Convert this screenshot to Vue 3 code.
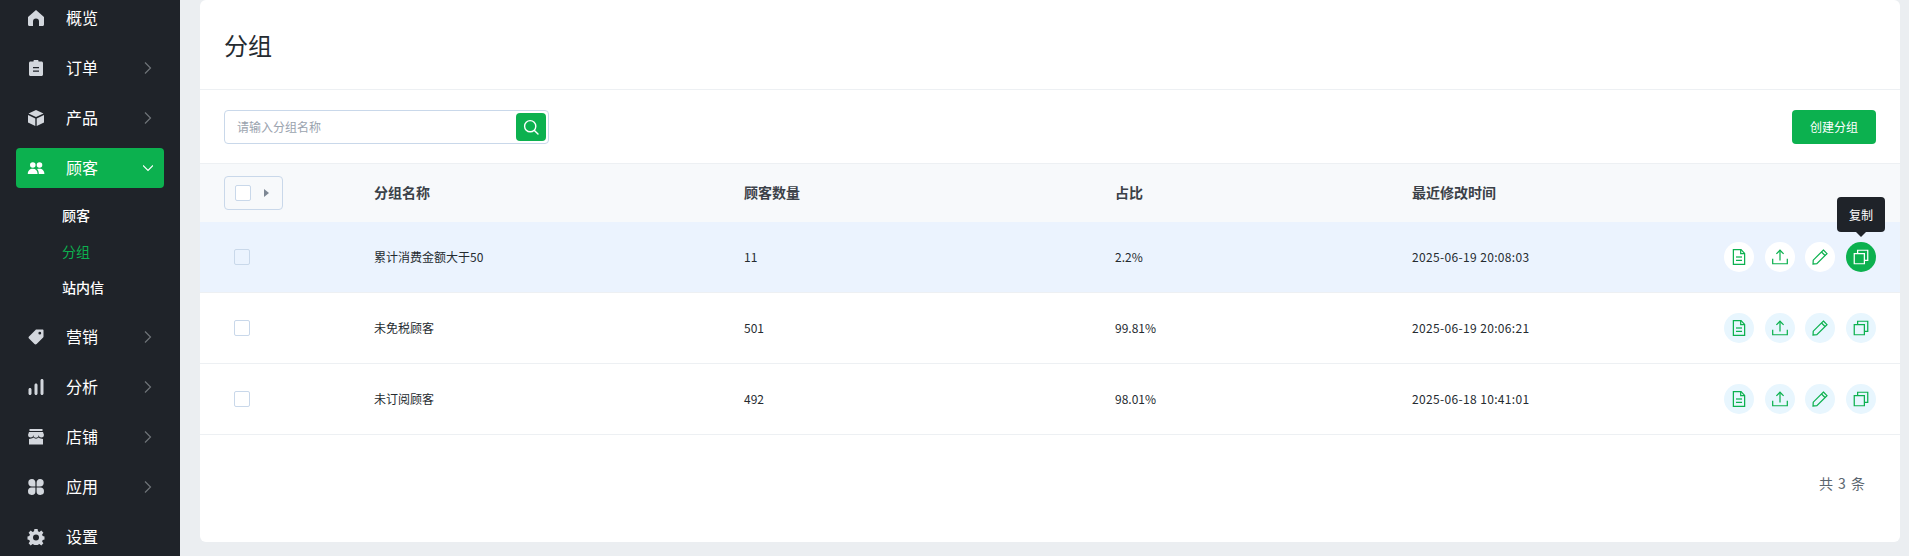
<template>
  <div class="page">
    <!-- Menu latéral -->
    <aside class="sidebar">
      <template v-for="item in menu" :key="item.label">
        <div class="nav-item" :class="{ active: item.active }">
          <svg class="nav-icon" viewBox="0 0 18 18">
            <path :d="item.icon" fill="currentColor" fill-rule="evenodd" />
          </svg>
          <span class="nav-label">{{ item.label }}</span>
          <svg v-if="item.arrow" class="nav-arrow" viewBox="0 0 10 14">
            <path :d="item.active ? 'M0 4.5 5 9.5 10 4.5' : 'M2 1.5 7.5 7 2 12.5'" fill="none" stroke="currentColor" stroke-width="1.2" />
          </svg>
        </div>
        <div v-if="item.children" class="sub-nav">
          <div v-for="sub in item.children" :key="sub.label" class="sub-item" :class="{ current: sub.current }">{{ sub.label }}</div>
        </div>
      </template>
    </aside>

    <main class="content">
      <section class="card">
        <h1 class="title">分组</h1>

        <div class="toolbar">
          <div class="search">
            <span class="placeholder">请输入分组名称</span>
            <button class="search-btn">
              <svg viewBox="0 0 16 16" width="16" height="16">
                <circle cx="7.2" cy="7.2" r="5.6" fill="none" stroke="#fff" stroke-width="1.4" />
                <path d="M11.4 11.4 15 15" stroke="#fff" stroke-width="1.4" stroke-linecap="round" />
              </svg>
            </button>
          </div>
          <button class="create-btn">创建分组</button>
        </div>

        <table class="table">
          <colgroup>
            <col class="col-check" />
            <col class="col-name" />
            <col class="col-count" />
            <col class="col-ratio" />
            <col class="col-date" />
            <col />
          </colgroup>
          <thead>
            <tr>
              <th>
                <div class="select-all">
                  <span class="checkbox"></span>
                  <span class="caret"></span>
                </div>
              </th>
              <th><span class="cell">分组名称</span></th>
              <th><span class="cell">顾客数量</span></th>
              <th><span class="cell">占比</span></th>
              <th><span class="cell">最近修改时间</span></th>
              <th></th>
            </tr>
          </thead>
          <tbody>
            <tr v-for="(row, i) in rows" :key="row.name" :class="{ hovered: i === 0 }">
              <td><span class="checkbox row-check"></span></td>
              <td><span class="cell">{{ row.name }}</span></td>
              <td><span class="cell">{{ row.count }}</span></td>
              <td><span class="cell">{{ row.ratio }}</span></td>
              <td><span class="cell date">{{ row.date }}</span></td>
              <td>
                <div class="actions">
                  <span v-for="(a, j) in actions" :key="a.name" class="action" :class="{ on: i === 0 && j === 3 }">
                    <svg viewBox="0 0 16 16" width="18" height="18" fill="none" stroke="currentColor" stroke-width="1.1">
                      <path v-for="d in a.paths" :key="d" :d="d" />
                    </svg>
                    <span v-if="i === 0 && j === 3" class="tooltip">{{ a.name }}</span>
                  </span>
                </div>
              </td>
            </tr>
          </tbody>
        </table>

        <div class="pagination">共 3 条</div>
      </section>
    </main>
  </div>
</template>

<script setup>
const menu = [
  { label: '概览', icon: 'M9 1 17 8V15.5C17 16.3 16.4 17 15.6 17H12V12.5A3 3 0 0 0 6 12.5V17H2.4C1.6 17 1 16.3 1 15.5V8Z' },
  { label: '订单', arrow: true, icon: 'M6.5 2.5V2C6.5 1.4 7 1 7.5 1H10.5C11 1 11.5 1.4 11.5 2V2.5H14.5C15.3 2.5 16 3.2 16 4V15.5C16 16.3 15.3 17 14.5 17H3.5C2.7 17 2 16.3 2 15.5V4C2 3.2 2.7 2.5 3.5 2.5ZM6 8V9.2H12V8ZM6 11.5V12.7H12V11.5Z' },
  { label: '产品', arrow: true, icon: 'M9 1 16.5 4.5 9 8 1.5 4.5ZM1 6 8.3 9.4V17L1 13.5ZM17 6V13.5L9.7 17V9.4Z' },
  {
    label: '顾客', arrow: true, active: true,
    icon: 'M5.8 3.2A2.8 2.8 0 1 1 5.8 8.8 2.8 2.8 0 0 1 5.8 3.2ZM12.5 3.2A2.8 2.8 0 1 1 12.5 8.8 2.8 2.8 0 0 1 12.5 3.2ZM0.8 15C0.8 11.8 2.8 9.8 5.8 9.8 8.8 9.8 10.6 11.8 10.6 15ZM11.8 15C11.8 13 11.2 11.2 10.1 10.1 10.8 9.9 11.6 9.8 12.5 9.8 15.4 9.8 17.4 11.8 17.4 15Z',
    children: [{ label: '顾客' }, { label: '分组', current: true }, { label: '站内信' }]
  },
  { label: '营销', arrow: true, icon: 'M9.5 1.5H15.5C16.1 1.5 16.5 1.9 16.5 2.5V8.5C16.5 8.9 16.4 9.2 16.1 9.5L9.6 16C9 16.6 8.1 16.6 7.5 16L2 10.5C1.4 9.9 1.4 9 2 8.4L8.5 1.9C8.8 1.6 9.1 1.5 9.5 1.5ZM12.8 3.8A1.4 1.4 0 1 0 12.8 6.6 1.4 1.4 0 0 0 12.8 3.8Z' },
  { label: '分析', arrow: true, icon: 'M1.5 11.5C1.5 10.7 2.1 10 3 10S4.5 10.7 4.5 11.5V15.5C4.5 16.3 3.9 17 3 17S1.5 16.3 1.5 15.5ZM7.5 7C7.5 6.2 8.1 5.5 9 5.5S10.5 6.2 10.5 7V15.5C10.5 16.3 9.9 17 9 17S7.5 16.3 7.5 15.5ZM13.5 2.5C13.5 1.7 14.1 1 15 1S16.5 1.7 16.5 2.5V15.5C16.5 16.3 15.9 17 15 17S13.5 16.3 13.5 15.5Z' },
  { label: '店铺', arrow: true, icon: 'M2.5 1H15.5V3H2.5ZM2 4H16L17 7A2.67 2.67 0 0 1 11.67 7 2.67 2.67 0 0 1 6.33 7 2.67 2.67 0 0 1 1 7ZM2 11C3.5 10.9 5 10.6 6.3 9.6 7.8 11 10.2 11 11.7 9.6 13 10.6 14.5 10.9 16 11V16.5H2Z' },
  { label: '应用', arrow: true, icon: 'M5 1A3.8 3.8 0 0 1 8.4 4.8V8.4H5A3.7 3.7 0 0 1 5 1ZM13 1A3.7 3.7 0 0 1 13 8.4H9.6V4.8A3.8 3.8 0 0 1 13 1ZM5 9.6H8.4V13.2A3.7 3.7 0 1 1 5 9.6ZM9.6 9.6H13A3.7 3.7 0 1 1 9.6 13.2Z' },
  { label: '设置', icon: 'M7.4 1H10.6L11 3.3 12.4 3.9 14.3 2.6 16.4 4.7 15.1 6.6 15.7 8 17.5 8.4V11.6L15.7 12 15.1 13.4 16.4 15.3 14.3 17.4 12.4 16.1 11 16.7 10.6 17H7.4L7 16.7 5.6 16.1 3.7 17.4 1.6 15.3 2.9 13.4 2.3 12 .5 11.6V8.4L2.3 8 2.9 6.6 1.6 4.7 3.7 2.6 5.6 3.9 7 3.3ZM9 6.5A3 3 0 1 0 9 12.5 3 3 0 0 0 9 6.5Z' }
]

const rows = [
  { name: '累计消费金额大于50', count: 11, ratio: '2.2%', date: '2025-06-19 20:08:03' },
  { name: '未免税顾客', count: 501, ratio: '99.81%', date: '2025-06-19 20:06:21' },
  { name: '未订阅顾客', count: 492, ratio: '98.01%', date: '2025-06-18 10:41:01' }
]

const actions = [
  { name: '详情', paths: ['M3 1.5H9.8L13 4.8V14.5H3Z', 'M9.5 1.5V5H13', 'M5.3 8H10.7', 'M5.3 11H10.7'] },
  { name: '导出', paths: ['M1.5 9.5V14H14.5V9.5', 'M8 11V2.2', 'M4.8 5.2 8 2 11.2 5.2'] },
  { name: '编辑', paths: ['M11 1.8 14.2 5 5.2 14 1.8 14.2 2 10.8Z', 'M9.3 3.5 12.5 6.7'] },
  { name: '复制', paths: ['M2 5H11V14H2Z', 'M5 5V2H14V11H11'] }
]
</script>

<style>
html, body {
  margin: 0;
  background: #ebeef1;
}
</style>

<style scoped>
.page {
  display: flex;
  height: 556px;
  overflow: hidden;
  font-family: "Noto Sans CJK SC", "Noto Sans", sans-serif;
  color: #252b30;
}

/* Sidebar */
.sidebar {
  width: 180px;
  flex: none;
  background: #1f2329;
  padding: 0 16px;
  box-sizing: border-box;
  margin-top: -2px;
  height: 560px;
}

.nav-item {
  display: flex;
  align-items: center;
  height: 40px;
  margin-bottom: 10px;
  padding: 0 11px;
  border-radius: 4px;
  color: #d3d7dd;
}

.nav-item.active {
  background: #0cb14f;
  color: #fff;
}

.nav-icon {
  width: 18px;
  height: 18px;
  flex: none;
}

.nav-label {
  margin-left: 21px;
  padding-bottom: 2px;
  font-size: 16px;
  line-height: 22px;
  color: #fff;
}

.nav-arrow {
  width: 10px;
  height: 14px;
  margin-left: auto;
  color: #6f7479;
}

.nav-item.active .nav-arrow {
  color: #fff;
}

.sub-nav {
  margin-top: -1px;
  margin-bottom: 12px;
}

.sub-item {
  height: 36px;
  line-height: 36px;
  padding-left: 46px;
  font-size: 14px;
  font-weight: 500;
  color: #fff;
}

.sub-item.current {
  color: #0cb14f;
  font-weight: 400;
}

/* Contenu */
.content {
  flex: 1;
  padding: 0 9px 14px 20px;
  min-width: 0;
}

.card {
  background: #fff;
  border-radius: 6px;
  height: 542px;
}

.title {
  margin: 0;
  height: 89px;
  line-height: 90px;
  padding-left: 24px;
  font-size: 24px;
  font-weight: 400;
  border-bottom: 1px solid #edf0f3;
}

.toolbar {
  display: flex;
  justify-content: space-between;
  align-items: center;
  height: 73px;
  padding: 0 24px;
  box-sizing: border-box;
}

.search {
  width: 325px;
  height: 34px;
  box-sizing: border-box;
  border: 1px solid #c9d8ea;
  border-radius: 4px;
  display: flex;
  align-items: center;
  justify-content: space-between;
  padding: 0 2px 0 12px;
}

.placeholder {
  font-size: 12px;
  color: #9aa3ae;
}

.search-btn {
  width: 30px;
  height: 28px;
  border: 0;
  padding: 0;
  border-radius: 4px;
  background: #0cb14f;
  display: flex;
  align-items: center;
  justify-content: center;
}

.create-btn {
  width: 84px;
  height: 34px;
  border: 0;
  border-radius: 4px;
  background: #0cb14f;
  color: #fff;
  font-family: inherit;
  font-size: 12px;
}

/* Tableau */
.table {
  width: 100%;
  table-layout: fixed;
  border-collapse: collapse;
  font-size: 12px;
}

.col-check { width: 174px; }
.col-name { width: 370px; }
.col-count { width: 371px; }
.col-ratio { width: 297px; }
.col-date { width: 300px; }

.table th {
  height: 58px;
  padding: 0;
  text-align: left;
  font-size: 14px;
  font-weight: 700;
  color: #3b4148;
  background: #f7f9fb;
  border-top: 1px solid #edf0f3;
}

.table td {
  height: 70px;
  padding: 0;
  border-bottom: 1px solid #edf0f3;
}

.table tr.hovered td {
  background: #ebf3fe;
}

.table th:first-child,
.table td:first-child {
  padding-left: 24px;
}

/* le texte des cellules remonte d'un pixel */
.cell {
  display: block;
  margin-bottom: 2px;
}

.date {
  letter-spacing: 0.35px;
}

.select-all {
  width: 59px;
  height: 34px;
  box-sizing: border-box;
  border: 1px solid #c9d8ea;
  border-radius: 4px;
  display: flex;
  align-items: center;
  padding-left: 10px;
  gap: 13px;
}

.checkbox {
  display: block;
  width: 16px;
  height: 16px;
  box-sizing: border-box;
  border: 1px solid #c9d8ea;
  border-radius: 2px;
  background: #fff;
}

.row-check {
  margin-left: 10px;
}

.hovered .row-check {
  background: #ebf3fe;
}

.caret {
  width: 0;
  height: 0;
  border-left: 5px solid #7d8794;
  border-top: 4px solid transparent;
  border-bottom: 4px solid transparent;
}

.actions {
  display: flex;
  justify-content: flex-end;
  gap: 10.67px;
  padding-right: 24px;
}

.action {
  position: relative;
  width: 30px;
  height: 30px;
  border-radius: 50%;
  background: #e8f6fe;
  color: #0cb14f;
  display: flex;
  align-items: center;
  justify-content: center;
}

.hovered .action {
  background: #fff;
}

.hovered .action.on {
  background: #0cb14f;
  color: #fff;
}

.tooltip {
  position: absolute;
  bottom: 40px;
  left: 50%;
  transform: translateX(-50%);
  width: 48px;
  height: 35px;
  line-height: 35px;
  text-align: center;
  border-radius: 4px;
  background: #1f2329;
  color: #fff;
  font-size: 12px;
}

.tooltip::after {
  content: "";
  position: absolute;
  top: 100%;
  left: 50%;
  margin-left: -5px;
  border-left: 5px solid transparent;
  border-right: 5px solid transparent;
  border-top: 5px solid #1f2329;
}

.pagination {
  text-align: right;
  padding: 38px 35px 0 0;
  line-height: 20px;
  font-size: 14px;
  color: #5c6670;
  word-spacing: 2px;
}
</style>
